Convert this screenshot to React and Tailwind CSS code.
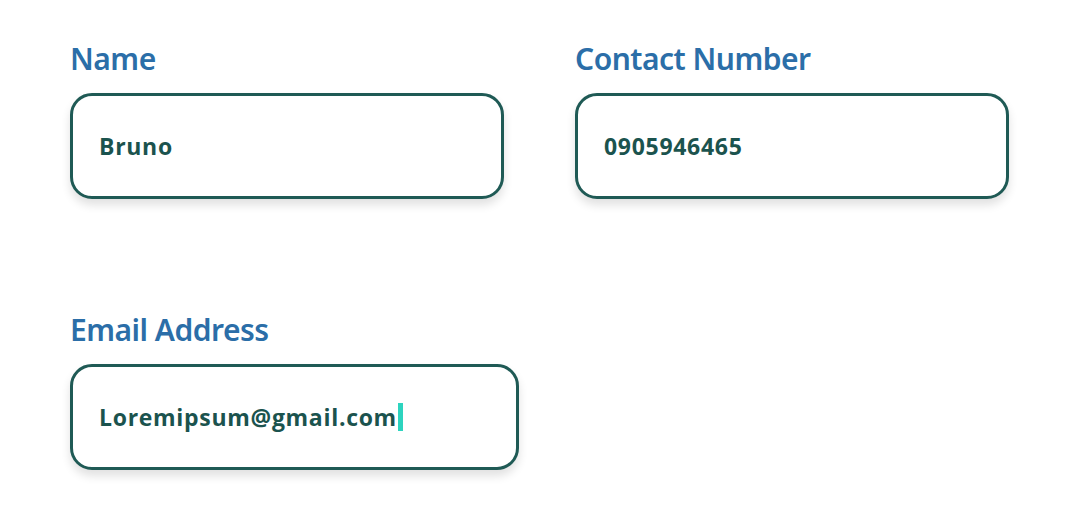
import React from "react";

function Field({ label, value, width, caret }) {
  return (
    <div className="flex flex-col">
      <div
        className="text-[30px] leading-[38px] font-semibold text-[#2b6ea8] tracking-[-0.5px]"
        style={{ fontFamily: '"Noto Sans", sans-serif' }}
      >
        {label}
      </div>
      <div
        className={`mt-[15px] h-[106px] ${width} rounded-[22px] border-[3px] border-[#1f5a55] bg-white shadow-[0_6px_10px_rgba(0,0,0,0.12)] flex items-center pl-[26px]`}
        style={{ height: 106, minHeight: 106, boxSizing: "border-box" }}
      >
        <span
          className="text-[23px] leading-[30px] font-bold text-[#1b534e] tracking-[0.7px] flex items-center"
          style={{ fontFamily: '"Open Sans", sans-serif' }}
        >
          {value}
          {caret && <span className="inline-block w-[5px] h-[28px] bg-[#2dd4bf] ml-[1px]" />}
        </span>
      </div>
    </div>
  );
}

export default function App() {
  return (
    <div className="w-[1077px] h-[529px] bg-white pt-[40px] pl-[70px]">
      <div className="flex gap-[71px]">
        <Field label="Name" value="Bruno" width="w-[434px]" />
        <Field label="Contact Number" value="0905946465" width="w-[434px]" />
      </div>
      <div className="mt-[112px]">
        <Field label="Email Address" value="Loremipsum@gmail.com" width="w-[449px]" caret />
      </div>
    </div>
  );
}
